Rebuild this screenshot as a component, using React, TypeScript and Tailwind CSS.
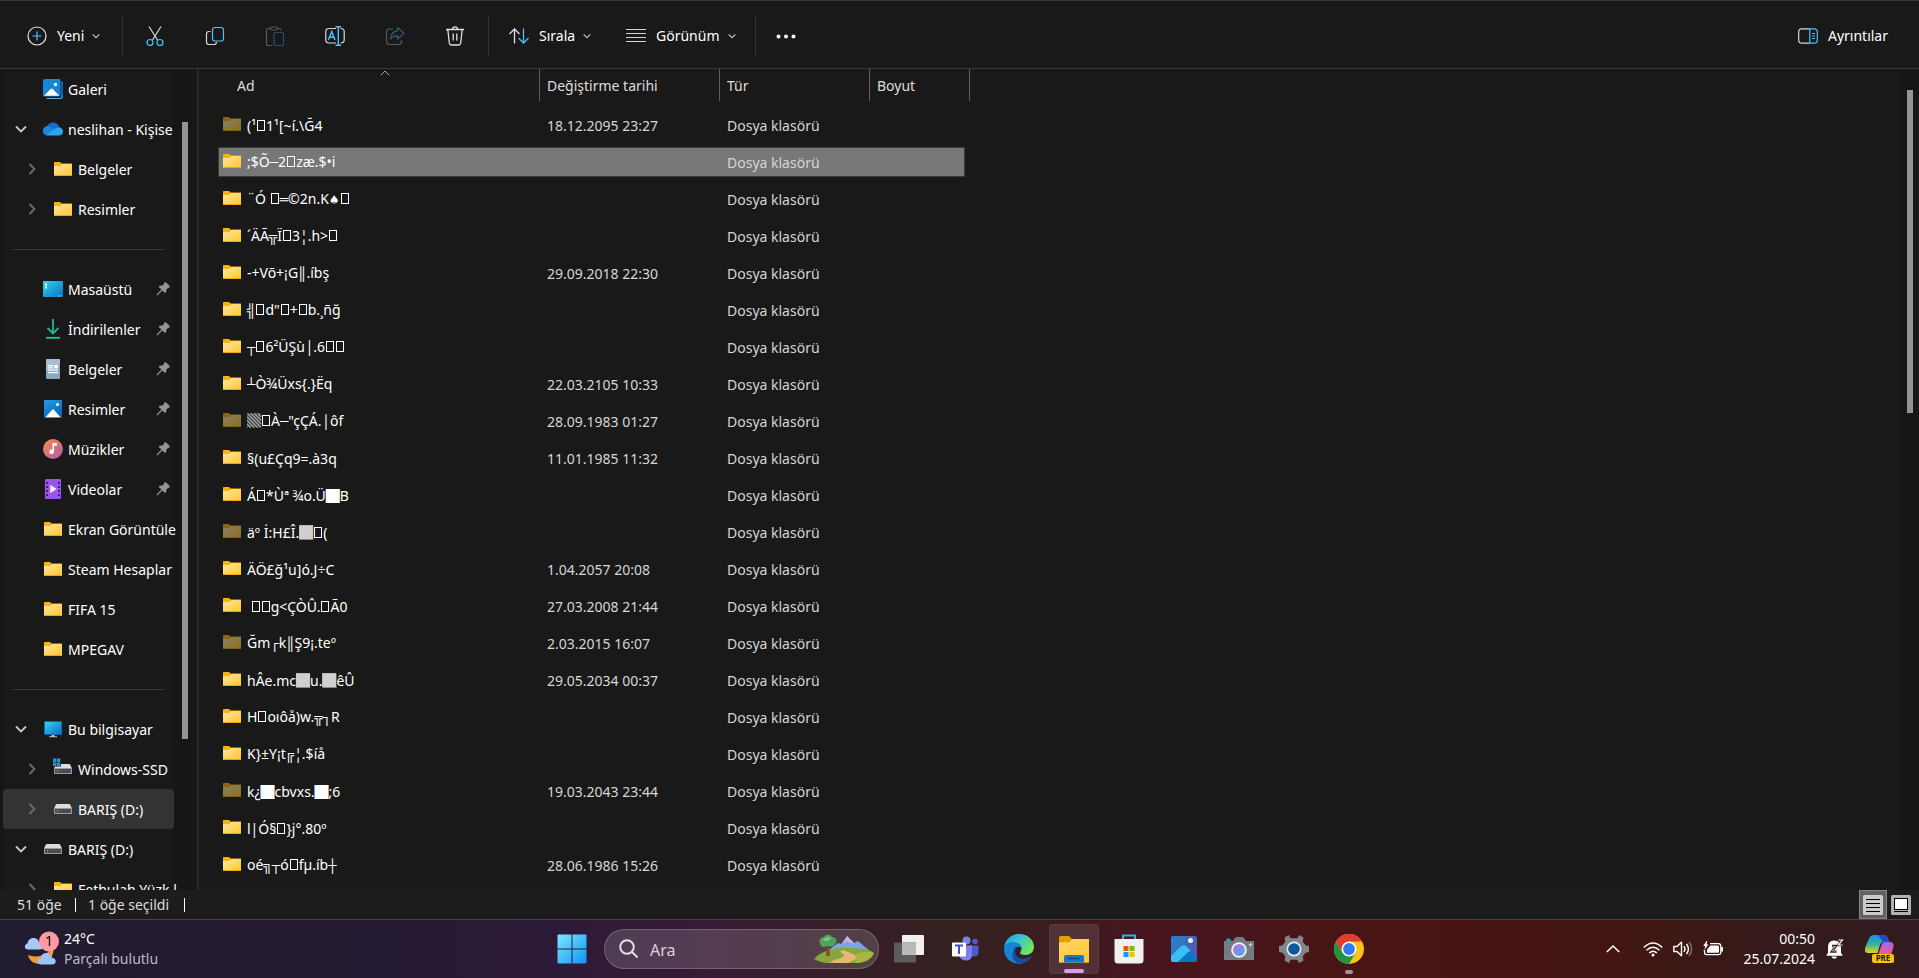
import React from 'react';
import clsx from 'clsx';

interface FileRow {
  name: string;
  date?: string;
  dim?: boolean;
  selected?: boolean;
}

const files: FileRow[] = [
  { name: '(¹▯1¹[~í.\\Ğ4', date: '18.12.2095 23:27', dim: true },
  { name: ';$Õ─2▯zæ.$•i', selected: true },
  { name: '¨Ó ▯═©2n.K♠▯' },
  { name: '´ÄÃ╦Ï▯3¦.h>▯' },
  { name: '-+Võ+¡G║.íbş', date: '29.09.2018 22:30' },
  { name: '╣▯d"▯+▯b.¸ñğ' },
  { name: '┬▯6²ÜŞù│.6▯▯' },
  { name: '┴Ò¾Üxs{.}Ëq', date: '22.03.2105 10:33' },
  { name: '▒▯À─"çÇÁ.│ôf', date: '28.09.1983 01:27', dim: true },
  { name: '§(u£Çq9=.à3q', date: '11.01.1985 11:32' },
  { name: 'Á▯*Ùª ¾o.Ü█B' },
  { name: 'äº İ:H£Î.▓▯(', dim: true },
  { name: 'ÄÖ£ğ¹u]ó.J÷C', date: '1.04.2057 20:08' },
  { name: '\u00a0▯▯g<ÇÒÛ.▯Ã0', date: '27.03.2008 21:44' },
  { name: 'Ğm┌k║Ş9¡.teº', date: '2.03.2015 16:07', dim: true },
  { name: 'hÂe.mc▓u.▓êÛ', date: '29.05.2034 00:37' },
  { name: 'H▯oıôå)w.╦┐R' },
  { name: 'K}±Y¡t╔¦.$íå' },
  { name: 'k¿█cbvxs.█;6', date: '19.03.2043 23:44', dim: true },
  { name: 'l|Ó§▯}j°.80º' },
  { name: 'oé╗┬ó▯fµ.íb┼', date: '28.06.1986 15:26' },
];

// Box drawing and shades come from the fonts that have them at the right width,
// ▯ stands for a missing glyph and is drawn as an empty box
const FileName = ({ name }: { name: string }) => (
  <span className="whitespace-pre pt-0.5">
    {name.split(/([▒▓█]|[─-╬]|▯|♠)/).map((part, i) => {
      if (part === '▯') return <span key={i} className="mx-px inline-block h-[11px] w-2 border border-white" />;
      if (/^[▒▓█]$/.test(part)) {
        return (
          <span
            key={i}
            className={clsx(
              "inline-block leading-[14px] font-['Noto_Sans_CJK_JP',sans-serif]",
              part === '▓' && 'bg-white/60',
              part === '▒' && 'bg-white/20'
            )}
          >
            {part}
          </span>
        );
      }
      if (/^[─-╬]$/.test(part)) return <span key={i} className="font-['Liberation_Mono',monospace]">{part}</span>;
      if (part === '♠') return <span key={i} className="text-xs font-['DejaVu_Sans',sans-serif]">{part}</span>;
      return part;
    })}
  </span>
);

const FolderIcon = ({ dim }: { dim?: boolean }) => (
  <svg viewBox="0 0 18 14" className={clsx('w-[18px] h-3.5 shrink-0', dim && 'opacity-50')}>
    <defs>
      <linearGradient id="folder" x1="0" y1="0" x2="1" y2="1">
        <stop offset="0" stopColor="#ffe9a6" />
        <stop offset="1" stopColor="#ffc62e" />
      </linearGradient>
    </defs>
    <path d="M0 0.8Q0 0 .8 0H6l1.6 1.4H18V5H0z" fill="#fbb20f" />
    <path d="M0 4h6.5L8.5 2H18v11.4H0z" fill="url(#folder)" />
    <path d="M0 13h18v1H0z" fill="#eba51a" />
  </svg>
);

const GalleryIcon = () => (
  <svg viewBox="0 0 20 20" className="w-5 h-5">
    <path d="M18.5 2.5q1.500.3 1.500 2V17q0 3-3 3H5q-1.500 0-2-1h14q1.500 0 1.500-2z" fill="#6aa9e4" />
    <path d="M18 2q2 .3 2 2v12q0 2-2 2.500z" fill="#1062b4" />
    <rect width="17.500" height="17.500" rx="1.500" fill="#1786d6" />
    <path d="M1 16.800 7.700 10q1-1 2 0l6.500 6.800z" fill="#fff" />
    <circle cx="12.500" cy="5.500" r="1.700" fill="#e8f6ff" />
  </svg>
);

const PicturesIcon = () => (
  <svg viewBox="0 0 20 20" className="w-5 h-5">
    <defs>
      <linearGradient id="pic" x1="0" y1="0" x2="0.5" y2="1">
        <stop offset="0" stopColor="#22a0e6" />
        <stop offset="1" stopColor="#0a67b8" />
      </linearGradient>
    </defs>
    <rect x="1" y="1" width="18" height="18" rx="1" fill="url(#pic)" />
    <path d="m2.500 18.200 6.700-7.500q.8-.8 1.600 0l6.700 7.500z" fill="#fff" />
    <circle cx="14.500" cy="5.500" r="1.600" fill="#e8f6ff" />
  </svg>
);

const OneDriveIcon = () => (
  <svg viewBox="0 0 20 20" className="w-5 h-5">
    <path d="M2 16Q0 15 0 11.500C0 9 2 7.500 4 7.300 5.500 4.500 8 3.300 10.500 3.500c3 .2 5 2 5.700 4.500L10 12z" fill="#0f6fd0" />
    <path d="M0 12.500C-.200 9.500 2 7.300 4.800 7.300c2 0 3 1 8 4L4 16.500Q.3 16 0 12.500" fill="#1a86e0" />
    <path d="M3.500 16.500 11.500 10q2-2 4.700-1.800c2.500.2 3.800 2.200 3.800 4.300 0 2.500-1.800 4-4 4z" fill="#2ba6ee" />
  </svg>
);

const DesktopIcon = () => (
  <svg viewBox="0 0 20 20" className="w-5 h-5">
    <defs>
      <linearGradient id="desk" x1="0" y1="0" x2="1" y2="1">
        <stop offset="0" stopColor="#36d3e6" />
        <stop offset="1" stopColor="#0b6fc9" />
      </linearGradient>
    </defs>
    <rect y="2" width="20" height="16" rx="1" fill="url(#desk)" />
    <path d="M2 4.500h2v2H2zM2 7.500h2v2H2zM15 16.500h1v1h-1zM17.500 16.500h1v1h-1z" fill="#fff" />
  </svg>
);

const DownloadsIcon = () => (
  <svg viewBox="0 0 20 20" className="w-5 h-5" fill="none" strokeWidth="1.800">
    <path d="M10 0v14M4.500 9l5.500 5.500L15.500 9" stroke="#1fb893" />
    <path d="M3 18.800h14" stroke="#27c08f" />
  </svg>
);

const DocumentsIcon = () => (
  <svg viewBox="0 0 20 20" className="w-5 h-5">
    <rect x="3" width="14" height="20" rx="1.200" fill="#8ca5c2" />
    <path d="M3 12V1.200Q3 0 4.200 0H15.800Q17 0 17 1.200V5z" fill="#a9bdd2" />
    <path d="M5 6h5v1.200H5zM5 8.300h5v1.200H5zM11 6h4v3.500h-4zM5 10.600h10v1.200H5zM5 13h10v1.200H5z" fill="#fff" />
  </svg>
);

const MusicIcon = () => (
  <svg viewBox="0 0 20 20" className="w-5 h-5">
    <defs>
      <linearGradient id="music" x1="0" y1="0" x2="1" y2="1">
        <stop offset=".2" stopColor="#ee8257" />
        <stop offset="1" stopColor="#a95bb5" />
      </linearGradient>
    </defs>
    <circle cx="10" cy="10" r="10" fill="url(#music)" />
    <path d="M9.500 4h4.300v2.700H11v6a2.300 2.300 0 1 1-1.500-2.100z" fill="#fff" />
  </svg>
);

const VideosIcon = () => (
  <svg viewBox="0 0 20 20" className="w-5 h-5">
    <rect x="2" width="16" height="20" rx="1.200" fill="#9b54ea" />
    <path d="M3.200 3h1.800v2H3.200zM3.200 7h1.800v2H3.200zM3.200 11h1.800v2H3.200zM3.200 15h1.800v2H3.200zM15 3h1.800v2H15zM15 7h1.800v2H15zM15 11h1.800v2H15zM15 15h1.800v2H15z" fill="#3b1a75" />
    <path d="m7.200 5.800 6.600 4.200-6.600 4.200z" fill="#f3eaff" />
  </svg>
);

const ComputerIcon = () => (
  <svg viewBox="0 0 20 20" className="w-5 h-5">
    <rect x="1" y="2" width="18" height="14" rx=".8" fill="#0c6ab0" />
    <rect x="2" y="3" width="16" height="12" fill="url(#desk)" />
    <path d="M8.500 16h3v1.300H14v1H6v-1h2.500z" fill="#b9c3ca" />
  </svg>
);

const DriveIcon = ({ system }: { system?: boolean }) => (
  <svg viewBox="0 0 20 20" className="w-5 h-5 overflow-visible">
    <path d="M4 5h12q.7 0 1.200.8L19 9.500H1l1.800-3.700Q3.300 5 4 5" fill="#dcdde0" />
    <rect x="1" y="9" width="18" height="6" rx=".6" fill="#9a9b9e" />
    <rect x="2" y="10" width="16" height="4" fill="#4b4c4f" />
    <path d="M4 11.300h1.300v1.300H4z" fill="#45f04a" />
    {system && (
      <>
        <path d="M-.5-1h8.500v8.500h-8.500z" fill="#191919" />
        <path d="M0-.5h3.400v3.400H0zM4-.5h3.400v3.400H4zM0 3.500h3.400v3.400H0zM4 3.500h3.400v3.400H4z" fill="#1b95e0" />
      </>
    )}
  </svg>
);

const PinIcon = () => (
  <svg viewBox="0 0 14 14" className="w-3.5 h-3.5 shrink-0" fill="#8f989e">
    <path d="M8.600.6q.8-.8 1.600 0l3.200 3.200q.8.9-.2 1.600L10.700 7l-.8 3.600q-.4.800-1.100.2L6.300 8.400 1.500 13.300H.6v-.9L5.500 7.600 3.100 5.200q-.6-.7.200-1.100L7 3.200z" />
  </svg>
);

const Chevron = ({ open }: { open?: boolean }) => (
  <svg viewBox="0 0 12 12" className="w-3 h-3 shrink-0" fill="none" strokeWidth="1.800" stroke={open ? '#c8c8c8' : '#6e6e6e'}>
    <path d={open ? 'M1 3.500l5 5 5-5' : 'M3.500 1l5 5-5 5'} />
  </svg>
);

interface NavItem {
  label: string;
  icon: React.ReactNode;
  open?: boolean;
  child?: boolean;
  pinned?: boolean;
  active?: boolean;
}

const navFolder = <FolderIcon />;

const navItems: (NavItem | null)[] = [
  { label: 'Galeri', icon: <GalleryIcon /> },
  { label: 'neslihan - Kişise', icon: <OneDriveIcon />, open: true },
  { label: 'Belgeler', icon: navFolder, child: true },
  { label: 'Resimler', icon: navFolder, child: true },
  null,
  { label: 'Masaüstü', icon: <DesktopIcon />, pinned: true },
  { label: 'İndirilenler', icon: <DownloadsIcon />, pinned: true },
  { label: 'Belgeler', icon: <DocumentsIcon />, pinned: true },
  { label: 'Resimler', icon: <PicturesIcon />, pinned: true },
  { label: 'Müzikler', icon: <MusicIcon />, pinned: true },
  { label: 'Videolar', icon: <VideosIcon />, pinned: true },
  { label: 'Ekran Görüntüle', icon: navFolder },
  { label: 'Steam Hesaplar', icon: navFolder },
  { label: 'FIFA 15', icon: navFolder },
  { label: 'MPEGAV', icon: navFolder },
  null,
  { label: 'Bu bilgisayar', icon: <ComputerIcon />, open: true },
  { label: 'Windows-SSD', icon: <DriveIcon system />, child: true },
  { label: 'BARIŞ (D:)', icon: <DriveIcon />, child: true, active: true },
  { label: 'BARIŞ (D:)', icon: <DriveIcon />, open: true },
  { label: 'Fethulah Yüzk l', icon: navFolder, child: true },
];

const Sidebar = () => (
  <aside className="flex w-[199px] shrink-0 overflow-hidden border-r-2 border-[#292929] bg-[#161616] pl-[3px]">
    <nav className="w-[171px] shrink-0 bg-[#191919]">
      {navItems.map((item, i) =>
        item ? (
          <a
            key={i}
            href="#"
            className={clsx(
              'flex h-10 items-center',
              item.child ? 'pl-[23px]' : 'pl-3',
              item.active && 'rounded-sm bg-[#333333]'
            )}
          >
            <span className="w-3 shrink-0">
              {(item.open || item.child) && <Chevron open={item.open} />}
            </span>
            <span className={clsx('flex w-5 shrink-0 justify-center', item.child ? 'ml-[15px]' : 'ml-4')}>{item.icon}</span>
            <span className="ml-[5px] min-w-0 flex-1 whitespace-nowrap pt-0.5">{item.label}</span>
            {item.pinned && <span className="pr-1"><PinIcon /></span>}
          </a>
        ) : (
          <div key={i} className="flex h-10 items-center pl-2.5 pr-2.5">
            <hr className="w-full border-[#3c3c3c]" />
          </div>
        )
      )}
    </nav>
    <div className="flex-1 pl-2 pt-[53px]">
      <div className="h-[617px] w-1.5 bg-[#949494]" />
    </div>
  </aside>
);

const DownIcon = () => (
  <svg viewBox="0 0 8 8" className="w-2 h-2" fill="none" stroke="#c4c4c4" strokeWidth="1.100">
    <path d="M.6 2.300 4 5.700l3.400-3.400" />
  </svg>
);

const iconButton = 'flex w-[60px] items-center justify-center self-stretch';
const svgClass = 'w-5 h-5';
const Separator = () => <div className="h-10 w-px bg-[#303030]" />;

const Toolbar = () => (
  <header className="flex h-[69px] shrink-0 items-center border-y border-[#383838] pl-[27px] pr-[31px] pt-0.5">
    <button className="flex w-[95px] items-center">
      <svg viewBox="0 0 20 20" className={svgClass} fill="none" strokeWidth="1.200">
        <circle cx="10" cy="10" r="9" stroke="#e4e4e4" />
        <path d="M10 5.500v9M5.500 10h9" stroke="#4cc2ff" />
      </svg>
      <span className="ml-2.5 mr-2">Yeni</span>
      <DownIcon />
    </button>
    <Separator />
    <div className="flex items-center self-stretch pl-0.5 pr-[3px]">
      <button className={iconButton} aria-label="Kes">
        <svg viewBox="0 0 20 20" className={svgClass} fill="none" strokeWidth="1.200">
          <path d="M4 .5 12.500 14M16 .5 7.500 14" stroke="#d8d8d8" />
          <circle cx="5" cy="16.500" r="3" stroke="#4cc2ff" />
          <circle cx="15" cy="16.500" r="3" stroke="#4cc2ff" />
        </svg>
      </button>
      <button className={iconButton} aria-label="Kopyala">
        <svg viewBox="0 0 20 20" className={svgClass} fill="none" strokeWidth="1.200">
          <path d="M5.500 5.500H4Q1.500 5.500 1.500 8v8q0 2.500 2.500 2.500h5q2.500 0 2.500-2.500" stroke="#d8d8d8" />
          <rect x="7.500" y="1.500" width="11" height="13.500" rx="2.500" stroke="#4cc2ff" />
        </svg>
      </button>
      <button className={iconButton} aria-label="Yapıştır">
        <svg viewBox="0 0 20 20" className={svgClass} fill="none" strokeWidth="1.200">
          <path d="M6 2.500H3.500Q1.500 2.500 1.500 4.500v13q0 2 2 2H7M12 2.500h2q2 0 2 2" stroke="#595959" />
          <rect x="5.500" y="1" width="7" height="3" rx="1.500" stroke="#595959" />
          <rect x="9" y="6.500" width="9.500" height="13" rx="1.500" stroke="#265069" />
        </svg>
      </button>
      <button className={iconButton} aria-label="Yeniden adlandır">
        <svg viewBox="0 0 20 20" className={svgClass} fill="none" strokeWidth="1.200">
          <path d="M11 2.500H4Q.8 2.500.8 5.500v8.500q0 3 3.200 3h7M15.500 2.500q3.700 0 3.700 3v8.500q0 3-3.700 3" stroke="#d8d8d8" />
          <path d="M13.300.7v18.600M10.500.7h5.600M10.500 19.300h5.600M3.300 14 6.700 5.500 10 14M4.500 11.200h4.400" stroke="#4cc2ff" strokeWidth="1.400" />
        </svg>
      </button>
      <button className={iconButton} aria-label="Paylaş">
        <svg viewBox="0 0 20 20" className={svgClass} fill="none" strokeWidth="1.200">
          <path d="M8 3H4.500Q1.500 3 1.500 6v9.500q0 3 3 3h9q3 0 3-3V14" stroke="#595959" />
          <path d="M12.500 1.500 19 7.200l-6.500 5.800V9.800C9 9.700 7 10.800 5.500 13 5.800 8.500 8 5.200 12.500 4.800z" stroke="#2c5d79" strokeLinejoin="round" />
        </svg>
      </button>
      <button className={iconButton} aria-label="Sil">
        <svg viewBox="0 0 20 20" className={svgClass} fill="none" stroke="#dedede" strokeWidth="1.300">
          <path d="M1 3.500h18M7.500 3.500q0-2.700 2.500-2.700t2.500 2.700M2.800 3.500l1.500 13.500q.3 2 2 2h7.400q1.700 0 2-2l1.500-13.500M8.200 7.500v7M11.800 7.500v7" />
        </svg>
      </button>
    </div>
    <Separator />
    <button className="ml-5 flex w-[117px] items-center">
      <svg viewBox="0 0 20 20" className={svgClass} fill="none" strokeWidth="1.300">
        <path d="M5.500 17.500V3M.5 8l5-5 5 5" stroke="#dedede" />
        <path d="M14.500 2.500V17M9.500 12l5 5 5-5" stroke="#4cc2ff" />
      </svg>
      <span className="ml-2.5 mr-2">Sırala</span>
      <DownIcon />
    </button>
    <button className="flex w-[129px] items-center">
      <svg viewBox="0 0 20 20" className={svgClass} stroke="#d4d4d4" strokeWidth="1">
        <path d="M0 3.500h20M0 7.500h20M0 11.500h20M0 15.500h20" />
      </svg>
      <span className="ml-2.5 mr-2">Görünüm</span>
      <DownIcon />
    </button>
    <Separator />
    <button className="ml-5" aria-label="Daha fazla">
      <svg viewBox="0 0 20 20" className={svgClass} fill="#fff">
        <circle cx="2.500" cy="10.500" r="2" />
        <circle cx="10" cy="10.500" r="2" />
        <circle cx="17.500" cy="10.500" r="2" />
      </svg>
    </button>
    <button className="ml-auto flex items-center gap-2.5">
      <svg viewBox="0 0 20 20" className={svgClass} fill="none" strokeWidth="1.200">
        <path d="M11.500 2.800H4q-3.300 0-3.300 3v8.400q0 3 3.300 3h7.500" stroke="#d8d8d8" />
        <path d="M11.800 2.800H16q3.300 0 3.300 3v8.400q0 3-3.300 3h-4.200zM14 7.500h3M14 10h3M14 12.500h3" stroke="#4cc2ff" />
      </svg>
      <span>Ayrıntılar</span>
    </button>
  </header>
);

const columns = ['Ad', 'Değiştirme tarihi', 'Tür', 'Boyut'];

const FileList = () => (
  <main className="min-w-0 flex-1 overflow-hidden bg-[#191919] pl-[19px]">
    <table className="w-[752px] table-fixed border-collapse">
      <colgroup>
        <col className="w-[322px]" />
        <col className="w-[180px]" />
        <col className="w-[150px]" />
        <col className="w-[100px]" />
      </colgroup>
      <thead>
        <tr>
          {columns.map((col, i) => (
            <th key={col} className="h-[37px] p-0 text-left align-top font-normal text-[#dedede]">
              <div className={clsx('relative flex h-8 items-center border-r border-[#5e5e5e] pt-0.5', i === 0 ? 'pl-[19px]' : 'pl-[7px]')}>
                {col}
                {i === 0 && (
                  <svg viewBox="0 0 10 6" className="absolute left-[162px] top-px h-1.5 w-2.5" fill="none" stroke="#a0a0a0">
                    <path d="M.8 5.200 5 1l4.200 4.200" />
                  </svg>
                )}
              </div>
            </th>
          ))}
        </tr>
      </thead>
      <tbody>
        {files.map(file => {
          const cell = clsx(
            'flex h-[30px] items-center border-y',
            file.selected ? 'border-[#3a3a3a] bg-[#777777]' : 'border-transparent'
          );
          return (
            <tr key={file.name} className="text-[#d6d6d6]">
              <td className="h-[37px] p-0">
                <div className={clsx(cell, 'gap-1.5 border-l pl-1 text-white')}>
                  <span className="pb-0.5"><FolderIcon dim={file.dim} /></span>
                  <FileName name={file.name} />
                </div>
              </td>
              <td className="p-0"><div className={clsx(cell, 'pl-[7px] pt-0.5')}>{file.date}</div></td>
              <td className="p-0"><div className={clsx(cell, 'pl-[7px] pt-0.5')}>Dosya klasörü</div></td>
              <td className="p-0 pr-[5px]"><div className={clsx(cell, 'border-r')} /></td>
            </tr>
          );
        })}
      </tbody>
    </table>
  </main>
);

const StatusBar = () => (
  <footer className="flex h-[29px] shrink-0 items-center bg-[#1c1c1c] pl-[17px] pr-2 text-[#dedede]">
    <span className="w-[58px]">51 öğe</span>
    <span className="h-3.5 w-px bg-white" />
    <span className="ml-3 w-24">1 öğe seçildi</span>
    <span className="h-3.5 w-px bg-white" />
    <button className="ml-auto flex h-[29px] w-7 items-center justify-center border border-[#858585] bg-[#636363]" aria-label="Ayrıntılar görünümü">
      <svg viewBox="0 0 20 20" className={svgClass}>
        <rect width="20" height="20" rx="1.500" fill="#cacaca" />
        <path d="M3 4.500h14M3 8.500h14M3 12.500h14M3 16.500h14" stroke="#000" />
      </svg>
    </button>
    <button className="ml-1" aria-label="Büyük simgeler">
      <svg viewBox="0 0 20 20" className={svgClass}>
        <rect width="20" height="20" rx="1.500" fill="#b2b2b2" />
        <rect x="3.500" y="3.500" width="13" height="11" fill="#fff" stroke="#000" />
        <path d="M3 16.500h14" stroke="#000" />
      </svg>
    </button>
  </footer>
);

const WeatherIcon = () => (
  <svg viewBox="0 0 36 36" className="h-9 w-9">
    <path d="M29 14c2 8-2 19-13 19-7 0-11-4-12-9 8 3 20 2 25-10" fill="#f29a2e" />
    <path d="M4 18.500c-4 0-4-5.500-.5-6C4 8.500 7 7 9.500 7c3 0 5 2 5.500 4.500 5 .5 5 7 1 7z" fill="#a9c8f8" />
    <path d="M17 33.500c-4.500 0-4.500-6-.5-6.200.6-3.500 3-5.300 5.800-5.300 3.200 0 5.200 2.200 5.700 4.800 5 .4 4.700 6.700.5 6.700z" fill="#9cc1fa" />
    <circle cx="25" cy="10.500" r="10" fill="#ff99a4" />
  </svg>
);

const SearchArt = () => (
  <svg viewBox="0 0 60 30" className="h-[30px] w-[60px]">
    <path d="M12 18 24 9l3 1 6-8 7 7 4-2 13 11z" fill="#7fa3dc" />
    <path d="M33 2l7 7-4 0-3-2-4 3z" fill="#c7b5dd" />
    <path d="M12 17h34l8-3-10 8H12z" fill="#5d97e8" />
    <path d="M0 25c6-7 17-11 30-11 14 0 26 1 30 5-2 6-8 9-14 10H14C8 29 4 27 0 25" fill="#86a83b" />
    <path d="M42 29c8-1 16-5 18-10-8-3-20 0-20 5z" fill="#a8b83c" />
    <path d="M16 29c2-4 12-4 14-7 1-2-4-3-4-5l4-1c1 2 12 3 12 7 0 3-5 4-7 6z" fill="#e9b577" />
    <path d="M13 10h2l1 12h-4z" fill="#8b4a2a" />
    <path d="M6 9c-2-4 2-6 4-6 1-3 7-3 8 0 4 0 6 4 3 7-2 4-6 2-8 2-3 2-7 1-7-3" fill="#4fa45b" />
    <path d="M9 6c1-3 6-4 8-2-1 3-5 4-8 2" fill="#7cc676" />
  </svg>
);

const taskIcon = 'h-[30px] w-[30px]';

const TaskViewIcon = () => (
  <svg viewBox="0 0 30 30" className={taskIcon}>
    <rect x="8" y="1" width="22" height="20" rx="1" fill="#f0f0f0" />
    <rect x="0" y="8.500" width="22" height="20" rx="1" fill="#5c5c5c" />
    <path d="M8 8.500h14V21H8z" fill="#b9b9b9" />
  </svg>
);

const TeamsIcon = () => (
  <svg viewBox="0 0 30 30" className={taskIcon}>
    <circle cx="17.500" cy="6.500" r="4" fill="#7b83eb" />
    <circle cx="26" cy="7.500" r="2.800" fill="#5059c9" />
    <path d="M20 11.500h9.500v6.500q0 4.500-5 4.500h-4.500z" fill="#5059c9" />
    <path d="M10 11.500h13v9q0 6-6 6t-7-6z" fill="#7b83eb" />
    <rect x="3" y="8.500" width="14" height="14" rx=".8" fill="#fff" />
    <path d="M6 11.500h8M10 11.500v8.500" stroke="#464eb8" strokeWidth="2" />
  </svg>
);

const EdgeIcon = () => (
  <svg viewBox="0 0 30 30" className={taskIcon}>
    <defs>
      <linearGradient id="edge" x1="0" y1="0" x2="1" y2=".5">
        <stop offset="0" stopColor="#2397df" />
        <stop offset=".5" stopColor="#33c5d6" />
        <stop offset="1" stopColor="#72e55b" />
      </linearGradient>
    </defs>
    <path d="M0 14C1 5 7.500 0 15 0c9 0 15 6 15 13 0 5-4 8-9 8-3 0-5-1-5-2s1.500-2 1.500-4.500c0-3-3-5.500-7-5.500C5 9 1 11 0 14" fill="url(#edge)" />
    <path d="M0 14.500C1 10 5 7.500 10 8c4 .4 7.500 3 7.500 6-4-3-8 0-8 5 0 6 5 10 11 9.500C17 30.500 12 30 9 28.500 3 26 0 21 0 14.500" fill="#1483d8" />
    <path d="M12 13c-3 7 2 14 11 11 2-.5 3.500-1.500 4.500-2 .6 0 .7.300.4.800C26 26 21 29.500 17 29.500c-6 0-9.500-5-8.500-10 .5-3 2-5.500 3.500-6.500" fill="#124f9e" />
  </svg>
);

const ExplorerIcon = () => (
  <svg viewBox="0 0 30 30" className={taskIcon}>
    <path d="M0 3.500Q0 2 1.500 2H10l3 3H28q2 0 2 2v6H0z" fill="#e0a100" />
    <path d="M0 8.500h10L13.500 5H30v23.500H0z" fill="url(#folder)" />
    <path d="M0 8.500h10L13.500 5H30v23.500H0z" fill="#ffc83d" opacity=".6" />
    <path d="M5 28.500V23q0-2 2-2h16q2 0 2 2v5.500z" fill="#1578cb" />
    <path d="M9 24.500h12" stroke="#0b4a87" strokeWidth="1.500" />
  </svg>
);

const StoreIcon = () => (
  <svg viewBox="0 0 30 30" className={taskIcon}>
    <path d="M9 6V1.500h12V6" fill="none" stroke="#2fb0ec" strokeWidth="2" />
    <path d="M.5 5h29v21q0 3.500-3.500 3.500H4Q.5 29.500.5 26z" fill="#f0f0f0" />
    <path d="M9.500 12h5v5h-5z" fill="#f1511b" />
    <path d="M15.500 12h5v5h-5z" fill="#80b90a" />
    <path d="M9.500 18h5v5h-5z" fill="#06a5ee" />
    <path d="M15.500 18h5v5h-5z" fill="#fbbc09" />
  </svg>
);

const PhotosIcon = () => (
  <svg viewBox="0 0 30 30" className={taskIcon}>
    <defs>
      <linearGradient id="photos" x1="0" y1="0" x2="1" y2=".6">
        <stop offset="0" stopColor="#1b87d2" />
        <stop offset="1" stopColor="#5a55a8" />
      </linearGradient>
    </defs>
    <rect x="2" y="2" width="26" height="26" rx="2" fill="url(#photos)" />
    <path d="M2 22 11.500 12.500q3-2.500 6 0L22 17 10 28H4q-2 0-2-2z" fill="#38c0f5" />
    <path d="M9 28 19 18q2-1.500 4 0l5 5.500V26q0 2-2 2z" fill="#1173c6" />
    <circle cx="21.500" cy="6.500" r="2.500" fill="#e9f3ff" />
  </svg>
);

const CameraIcon = () => (
  <svg viewBox="0 0 30 30" className={taskIcon}>
    <defs>
      <linearGradient id="lens" x1="0" y1="0" x2="1" y2="1">
        <stop offset=".2" stopColor="#b078e6" />
        <stop offset="1" stopColor="#2fb4f0" />
      </linearGradient>
    </defs>
    <path d="M2 7V6q0-1.500 1.500-1.500h2Q7 4.500 7 6v1z" fill="#1b9de2" />
    <path d="M0 7h9l2-3q.5-1 2-1h5q1.500 0 2 1l2 3h8v19H0z" fill="#757b80" />
    <circle cx="15" cy="16" r="7.800" fill="#f2f2f2" />
    <circle cx="15" cy="16" r="6" fill="url(#lens)" />
    <path d="M26.500 9v3.400M24.800 10.700h3.400" stroke="#d7d7d7" />
  </svg>
);

const SettingsIcon = () => (
  <svg viewBox="0 0 30 30" className={taskIcon}>
    <path d="m10 1 1.500 3.200h7L20 1l4.500 2.500-.8 4 2.800 3.700L30 12v6l-3.500.8-2.800 3.700.8 4L20 29l-1.500-3.200h-7L10 29l-4.500-2.500.8-4-2.800-3.700L0 18v-6l3.500-.8 2.800-3.700-.8-4z" fill="#80868b" />
    <circle cx="15" cy="15" r="7.500" fill="#e8eaec" />
    <circle cx="15" cy="15" r="5.800" fill="#0f579f" />
  </svg>
);

const ChromeIcon = () => (
  <svg viewBox="0 0 30 30" className={taskIcon}>
    <circle cx="15" cy="15" r="15" fill="#fbc116" />
    <path d="M2 7.500A15 15 0 0 1 28 7.500H15L8.500 19z" fill="#e33b2e" />
    <path d="M2 7.500A15 15 0 0 0 15 30l6.500-11.200L8.500 19z" fill="#229342" />
    <circle cx="15" cy="15" r="7.500" fill="#fff" />
    <circle cx="15" cy="15" r="5.900" fill="#2f7bee" />
  </svg>
);

const apps = [
  { label: 'Görev görünümü', icon: <TaskViewIcon /> },
  { label: 'Teams', icon: <TeamsIcon /> },
  { label: 'Edge', icon: <EdgeIcon /> },
  { label: 'Dosya Gezgini', icon: <ExplorerIcon />, active: true },
  { label: 'Store', icon: <StoreIcon /> },
  { label: 'Fotoğraflar', icon: <PhotosIcon /> },
  { label: 'Kamera', icon: <CameraIcon /> },
  { label: 'Ayarlar', icon: <SettingsIcon /> },
  { label: 'Chrome', icon: <ChromeIcon />, running: true },
];

const Tray = () => (
  <div className="flex items-center justify-end pr-6 text-white">
    <button aria-label="Gizli simgeler" className="mr-[23px]">
      <svg viewBox="0 0 14 14" className="h-3.5 w-3.5" fill="none" stroke="#fff" strokeWidth="1.600">
        <path d="M.8 10 7 4l6.200 6" />
      </svg>
    </button>
    <button className="flex items-center gap-2.5" aria-label="Ağ, ses ve pil">
      <svg viewBox="0 0 20 16" className="h-4 w-5" fill="none" stroke="#fff" strokeWidth="1.400">
        <path d="M.7 6.500q9.300-9 18.600 0M3.500 9.300q6.500-6.300 13 0M6.200 12q3.800-3.600 7.600 0" />
        <circle cx="10" cy="14" r="1.500" fill="#fff" stroke="none" />
      </svg>
      <svg viewBox="0 0 20 16" className="h-4 w-5" fill="none" stroke="#fff" strokeWidth="1.400">
        <path d="M.8 5.500H4L8.500 1.200v13.600L4 10.500H.8z" strokeLinejoin="round" />
        <path d="M11 5.200q2 2.800 0 5.600M13.500 3q3.800 5 0 10" />
        <path d="M16 1q5.200 7 0 14" stroke="#8a6f6f" />
      </svg>
      <svg viewBox="0 0 20 16" className="h-4 w-5" fill="none" stroke="#fff" strokeWidth="1.300">
        <path d="M7 2.700h8.500q2.300 0 2.300 2.300v6.300q0 2.300-2.300 2.300H3.500q-2 0-2-2.300V9" />
        <path d="M4 11.800V8.500L7.500 4.500H15q1 0 1 1v5.300q0 1-1 1z" fill="#fff" stroke="none" />
        <path d="M18.200 6h1.800v4.500h-1.800zM3.500 0 .2 5h2L1.500 8.800 5.500 3.600h-2L4.300 0z" fill="#fff" stroke="none" />
      </svg>
    </button>
    <div className="ml-5 flex w-[72px] flex-col items-end whitespace-nowrap leading-5">
      <span>00:50</span>
      <span>25.07.2024</span>
    </div>
    <button aria-label="Bildirimler" className="ml-[11px]">
      <svg viewBox="0 0 18 20" className="h-5 w-[18px]" fill="#fff">
        <path d="M2 14V8q0-6.500 6-6.500 7 0 7 6.500v6l1.500 2v.8H.5V16zM5.500 17.500h5.500q-.5 2.200-2.700 2.200t-2.800-2.200" />
        <path d="M6 7h4l-4 5.500h4.500M12.500 1h4l-4 5h4" fill="none" stroke="#3a1a1a" strokeWidth="2.400" />
        <path d="M12.500 1h4l-4 5h4" fill="none" stroke="#fff" strokeWidth="1.200" />
        <path d="M6.500 7.500h3l-3 4.500h3.500" fill="none" stroke="#fff" strokeWidth=".6" />
      </svg>
    </button>
    <button aria-label="Copilot" className="ml-[21px]">
      <svg viewBox="0 0 30 30" className={taskIcon}>
        <defs>
          <linearGradient id="cop1" x1="0" y1="0" x2="0" y2="1">
            <stop offset="0" stopColor="#1d8cf0" />
            <stop offset=".5" stopColor="#2fb39c" />
            <stop offset="1" stopColor="#e8d21c" />
          </linearGradient>
          <linearGradient id="cop2" x1="0" y1="0" x2="0" y2="1">
            <stop offset="0" stopColor="#a864f0" />
            <stop offset="1" stopColor="#f55a8a" />
          </linearGradient>
        </defs>
        <path d="M9 1h10q3 0 4 4l1 3h-6q-2 0-3 3l-2.500 8H3q-4 0-3-5L4 4.500Q5 1 9 1" fill="url(#cop1)" />
        <path d="M13 1h6q3 0 4 4l1 3h-6z" fill="#1a4bd0" />
        <path d="M19 8h6q4 0 3.500 5L26 21H13l3.500-10Q17.500 8 19 8" fill="url(#cop2)" />
        <rect x="7" y="20" width="22" height="9" rx="2" fill="#f8c20a" />
        <text x="18" y="27.300" textAnchor="middle" fontSize="8" fontWeight="700" fill="#1a1a1a">PRE</text>
      </svg>
    </button>
  </div>
);

const Taskbar = () => (
  <div className="grid h-[59px] shrink-0 grid-cols-[1fr_auto_1fr] border-t border-[#4a4046] bg-[linear-gradient(90deg,#211c2f_0%,#251a33_20%,#2c1a38_29%,#381a34_37%,#35211f_50%,#3a1d20_54%,#47151f_60%,#481512_72%,#431611_84%,#331a1b_93%,#321b20_100%)]">
    <div className="flex items-center pl-6">
      <div className="relative h-9 w-9">
        <WeatherIcon />
        <span className="absolute left-[15px] top-0 w-5 text-center leading-5 text-black">1</span>
      </div>
      <div className="ml-1 leading-5">
        <div className="text-white">24°C</div>
        <div className="text-[#bdb9c2]">Parçalı bulutlu</div>
      </div>
    </div>
    <div className="flex items-center pl-px">
      <button className="flex w-[55px] justify-center" aria-label="Başlat">
        <svg viewBox="0 0 30 30" className={taskIcon}>
          <defs>
            <linearGradient id="win" x1="0" y1="0" x2="1" y2="1">
              <stop offset="0" stopColor="#7de9ff" />
              <stop offset="1" stopColor="#0c93f7" />
            </linearGradient>
          </defs>
          <path d="M.5 1.500Q.5.5 1.500.5h13v14H.5zM15.500.5h13q1 0 1 1v13h-14zM.5 15.500h14v14h-13q-1 0-1-1zM15.500 15.500h14v13q0 1-1 1h-13z" fill="url(#win)" />
        </svg>
      </button>
      <label className="ml-[5px] mr-0.5 flex h-10 w-[275px] items-center rounded-full border border-white/20 bg-white/15 pl-3.5 pr-1">
        <svg viewBox="0 0 20 20" className={svgClass} fill="none" stroke="#e5dfe5" strokeWidth="2">
          <circle cx="8" cy="8" r="6.800" />
          <path d="m13 13 5.500 5.500" />
        </svg>
        <input
          className="ml-[11px] w-0 flex-1 bg-transparent pt-0.5 text-base text-white outline-none placeholder:text-[#d9d2d9]"
          placeholder="Ara"
          aria-label="Ara"
        />
        <SearchArt />
      </label>
      {apps.map(app => (
        <button
          key={app.label}
          aria-label={app.label}
          className="flex w-[55px] justify-center"
        >
          <span className={clsx('relative flex h-[50px] w-[50px] items-center justify-center rounded', app.active && 'border border-white/5 bg-white/10')}>
            {app.icon}
            {app.active && <span className="absolute bottom-0 h-1 w-5 rounded-full bg-[#dd9ae6]" />}
            {app.running && <span className="absolute bottom-0 h-1 w-2 rounded-full bg-[#a98f8f]" />}
          </span>
        </button>
      ))}
    </div>
    <Tray />
  </div>
);

const App: React.FC = () => (
  <div className="flex h-screen flex-col overflow-hidden bg-[#191919] font-['Noto_Sans','DejaVu_Sans',sans-serif] text-sm text-white">
    <Toolbar />
    <div className="flex min-h-0 flex-1">
      <Sidebar />
      <FileList />
      <div className="w-5 shrink-0 bg-[#161616] pl-2 pt-[21px]">
        <div className="h-[323px] w-1.5 bg-[#949494]" />
      </div>
    </div>
    <StatusBar />
    <Taskbar />
  </div>
);

export default App;
